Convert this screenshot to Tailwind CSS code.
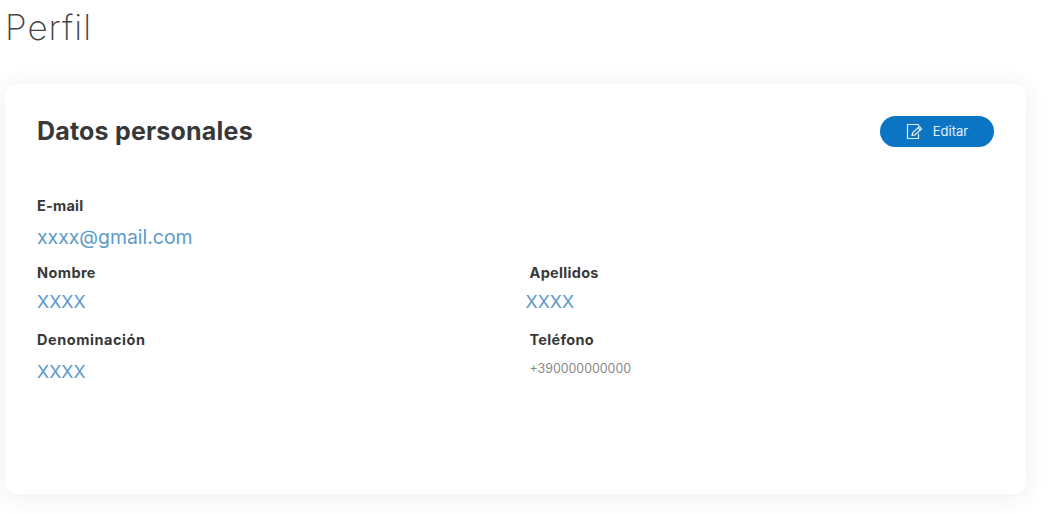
<!DOCTYPE html>
<html lang="es">
<head>
<meta charset="utf-8">
<title>Perfil</title>
<script src="https://cdn.jsdelivr.net/npm/@tailwindcss/browser@4"></script>
</head>
<body class="bg-white font-['Inter',sans-serif] overflow-hidden">
<div class="h-[514px] w-[1054px] pl-[5px] pr-[28px]">
    <h1 class="h-[84px] pt-[7px] text-[35px] leading-[40px] font-extralight text-[#444] tracking-[1px]">Perfil</h1>
    <div class="h-[410px] bg-white rounded-xl shadow-[0_2px_24px_rgba(30,50,90,0.09)] px-[32px] pt-[32px]">
        <div class="flex items-center justify-between h-[31px]">
            <h2 class="text-[25px] leading-[31px] font-bold text-[#383838] tracking-[0.2px]">Datos personales</h2>
            <button class="w-[114px] h-[31px] bg-[#0b75c4] rounded-full flex items-center justify-center gap-[10px] text-white/90 text-[13px]">
                <svg xmlns="http://www.w3.org/2000/svg" width="17" height="17" viewBox="0 0 17 17" fill="none" stroke="#e3f0fa" stroke-width="1.2" stroke-linejoin="round" stroke-linecap="round">
                    <path d="M12.5 3V1.5H1.5V15.5H12.5V11" />
                    <path d="M6 12.5L6.8 9.5L13.5 3.6L15.6 5.8L9 11.8Z" />
                    <path d="M12.2 4.8L14.3 7" />
                </svg>
                Editar
            </button>
        </div>
        <div class="mt-[49px]">
            <div class="text-[14.5px] leading-[20px] font-bold text-[#383838] tracking-[0.2px]">E-mail</div>
            <div class="mt-[9px] text-[19.4px] leading-[24px] text-[#5b9ac8]">xxxx@gmail.com</div>
        </div>
        <div class="grid grid-cols-2 mt-[14px]">
            <div class="h-[67px]">
                <div class="text-[14.5px] leading-[20px] font-bold text-[#383838] tracking-[0.4px]">Nombre</div>
                <div class="mt-[7px] text-[17.8px] leading-[24px] text-[#5b9ac8]">XXXX</div>
            </div>
            <div class="h-[67px] pl-[14px]">
                <div class="text-[14.5px] leading-[20px] font-bold text-[#383838] tracking-[0.3px]">Apellidos</div>
                <div class="-ml-[4px] mt-[7px] text-[17.8px] leading-[24px] text-[#5b9ac8]">XXXX</div>
            </div>
            <div>
                <div class="text-[14.5px] leading-[20px] font-bold text-[#383838] tracking-[0.55px]">Denominación</div>
                <div class="mt-[10px] text-[17.8px] leading-[24px] text-[#5b9ac8]">XXXX</div>
            </div>
            <div class="pl-[14px]">
                <div class="text-[14.5px] leading-[20px] font-bold text-[#383838] tracking-[0.3px]">Teléfono</div>
                <div class="mt-[9px] text-[12.4px] leading-[20px] text-[#888]">+390000000000</div>
            </div>
        </div>
    </div>
</div>
</body>
</html>
